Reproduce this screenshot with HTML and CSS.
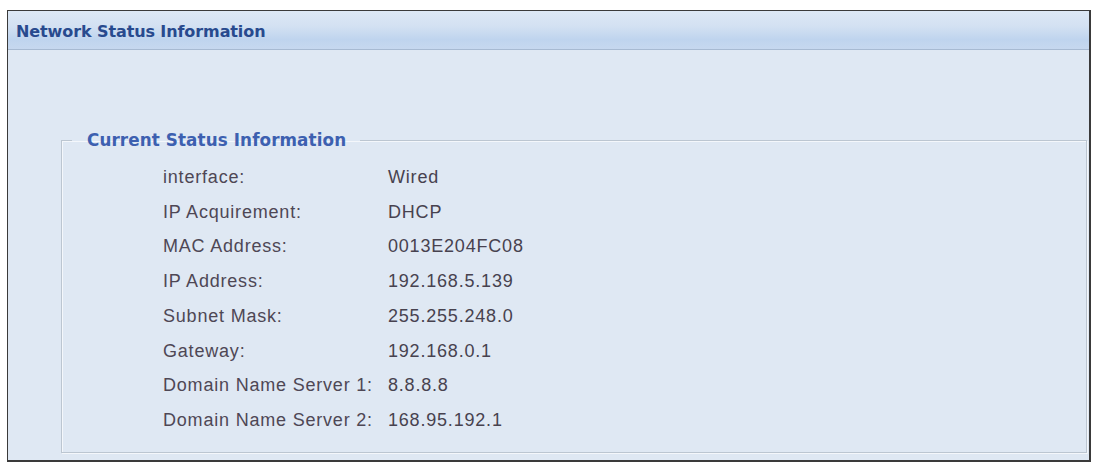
FILE: index.html
```html
<!DOCTYPE html>
<html>
 <head>
  <title>Network Status Information</title>
  <link rel="stylesheet" href="styles.css">
 </head>
 <body>
  <div class="panel">
   <div class="panel-header">Network Status Information</div>
   <div class="panel-body">
    <!-- Estado actual de la red -->
    <fieldset class="status">
     <legend>Current Status Information</legend>
     <div class="rows">
      <span class="label">interface:</span><span class="value">Wired</span>
      <span class="label">IP Acquirement:</span><span class="value">DHCP</span>
      <span class="label">MAC Address:</span><span class="value">0013E204FC08</span>
      <span class="label">IP Address:</span><span class="value">192.168.5.139</span>
      <span class="label">Subnet Mask:</span><span class="value">255.255.248.0</span>
      <span class="label">Gateway:</span><span class="value">192.168.0.1</span>
      <span class="label">Domain Name Server 1:</span><span class="value">8.8.8.8</span>
      <span class="label">Domain Name Server 2:</span><span class="value">168.95.192.1</span>
     </div>
    </fieldset>
   </div>
  </div>
 </body>
</html>
```

FILE: styles.css
```css
body {
 margin: 0;
 background-color: #fff;
 font-family: "Liberation Sans", Arial, sans-serif;
}
.panel {
 margin: 10px 4px 0 7px;
 height: 449px;
 border: 1px solid #3a3a3a;
 border-right-width: 2px;
 border-bottom-width: 2px;
 background-color: #dfe8f3;
 display: flex;
 flex-direction: column;
}
.panel-header {
 height: 38px;
 line-height: 41px;
 padding-left: 8px;
 border-bottom: 1px solid #a7bad2;
 background: linear-gradient(to bottom, #dde8f5 0%, #d3e1f2 40%, #bfd4ee 75%, #c6d8ef 100%);
 font-family: "DejaVu Sans", Verdana, sans-serif;
 font-weight: bold;
 font-size: 16px;
 color: #284a8e;
 letter-spacing: -0.1px;
}
.panel-body {
 flex: 1;
 display: flex;
 padding: 80px 2px 7px 53px;
}
/* Cuadro de estado */
.status {
 flex: 1;
 margin: 0;
 padding: 0 0 12px 0;
 border: 1px solid #bcc6d1;
 box-shadow: inset 1px 1px 0 #f4f7fb, 1px 1px 0 #f4f7fb;
}
.status legend {
 margin-left: 10px;
 padding: 0 14px 0 15px;
 font-family: "DejaVu Sans", Verdana, sans-serif;
 font-weight: bold;
 font-size: 16.8px;
 color: #3d60b0;
 letter-spacing: 0.1px;
}
.rows {
 display: grid;
 grid-template-columns: 225px auto;
 padding: 10px 0 0 101px;
 line-height: 34.7px;
 font-size: 18px;
 letter-spacing: 0.8px;
}
.label {
 color: #4e4755;
}
.value {
 color: #47424f;
}
```
